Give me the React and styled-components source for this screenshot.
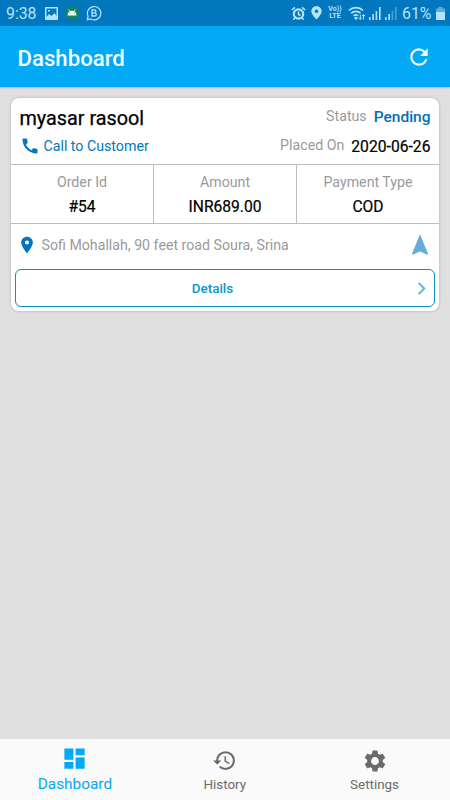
import React from 'react'
import styled, { createGlobalStyle } from 'styled-components'
import {
  MdCall,
  MdChevronRight,
  MdDashboard,
  MdHistory,
  MdNavigation,
  MdPlace,
  MdRefresh,
  MdSettings,
} from 'react-icons/md'

const order = {
  customer: 'myasar rasool',
  status: 'Pending',
  placedOn: '2020-06-26',
  address: 'Sofi Mohallah, 90 feet road Soura, Srina',
}

const stats = [
  { label: 'Order Id', value: '#54' },
  { label: 'Amount', value: 'INR689.00' },
  { label: 'Payment Type', value: 'COD' },
]

const PictureIcon = () => (
  <svg width="13" height="13" viewBox="0 0 13 13">
    <path
      fill="currentColor"
      fillRule="evenodd"
      d="M1 0h11a1 1 0 0 1 1 1v11a1 1 0 0 1-1 1H1a1 1 0 0 1-1-1V1a1 1 0 0 1 1-1zM1.500 1.500v8.500L4 7l2.500 2L9.500 6l2 3V1.500zM3 3h2v1.600H3z"
    />
  </svg>
)

const AndroidIcon = () => (
  <svg width="16" height="16" viewBox="0 0 16 16">
    <circle cx="8" cy="8" r="7.300" fill="#0c7c68" />
    <path d="M4 2v12M8 1v14M12 2v12M1 8h14M2 4h12M2 12h12" stroke="#2a927c" strokeWidth=".5" />
    <path d="M3.500 10.500a4.500 4.800 0 0 1 9 0z" fill="#f2fffb" />
    <path d="M4.800 4.500l1.500 2.500M11.200 4.500L9.700 7" stroke="#f2fffb" strokeWidth=".8" />
    <circle cx="6" cy="8.500" r=".5" fill="#0c7c68" />
    <circle cx="10" cy="8.500" r=".5" fill="#0c7c68" />
  </svg>
)

const BusinessIcon = () => (
  <svg width="16" height="16" viewBox="0 0 16 16" fill="none" stroke="currentColor">
    <path d="M1.300 14.700l.8-3.500A6.700 6.700 0 1 1 4.700 14z" strokeWidth="1.200" />
    <path d="M6 4.800h2.400a1.500 1.500 0 0 1 0 3H6zM6 7.800h2.700a1.600 1.600 0 0 1 0 3.200H6z" strokeWidth="1.300" />
  </svg>
)

const AlarmIcon = () => (
  <svg width="15" height="15" viewBox="0 0 15 15">
    <circle cx="7.500" cy="8" r="4.700" fill="none" stroke="currentColor" strokeWidth="2.200" />
    <path
      d="M.8 4L4 1.300M14.200 4L11 1.300M3.800 12L2.400 13.600M11.200 12l1.400 1.600M7.500 5.500v3l2 1"
      fill="none"
      stroke="currentColor"
      strokeWidth="1.600"
    />
  </svg>
)

const PinIcon = () => (
  <svg width="11" height="14" viewBox="0 0 11 14">
    <path
      fill="currentColor"
      fillRule="evenodd"
      d="M5.500 0A5.200 5.200 0 0 0 .3 5.200C.3 8.600 5.500 13.500 5.500 13.500s5.200-4.900 5.200-8.300A5.200 5.200 0 0 0 5.500 0zm0 3.500a1.800 1.800 0 1 1 0 3.600 1.800 1.800 0 0 1 0-3.600z"
    />
  </svg>
)

const WifiIcon = () => (
  <svg width="18" height="15" viewBox="0 0 18 15" fill="none" stroke="currentColor">
    <path d="M.8 4.500a10.500 10.500 0 0 1 14.400 0M3.200 7.300a7 7 0 0 1 9.400-.2M5.500 10a3.800 3.800 0 0 1 4.600-.4" strokeWidth="1.600" />
    <path d="M8 10.600l2 1.400-2 2-2-2z" fill="currentColor" stroke="none" />
    <path d="M12.300 8.500v4.800M10.800 11.800l1.500 1.700 1.500-1.700M15.500 13.500V8.700M14 10.200l1.500-1.700 1.500 1.700" strokeWidth="1" />
  </svg>
)

const SignalIcon = ({ weak }) => (
  <svg width="12" height="13" viewBox="0 0 12 13" fill="currentColor">
    <path d="M0 10h1.500v3H0zM3.300 7h1.600v6H3.300z" />
    <path d="M6.600 4h1.600v9H6.600z" opacity={weak ? 0.4 : 1} />
    <path d="M10 0h1.600v13H10z" opacity={weak ? 0.4 : 1} />
  </svg>
)

const BatteryIcon = () => (
  <svg width="9" height="13" viewBox="0 0 9 13" fill="currentColor">
    <path d="M2.500 0h4v1.500H9V5H0V1.500h2.500z" opacity=".5" />
    <path d="M0 5h9v7.500a.5.5 0 0 1-.5.5h-8a.5.5 0 0 1-.5-.5z" />
  </svg>
)

const App = () => {
  return (
    <>
      <GlobalStyle />
      <Screen>
        <StatusBar>
          <Clock>9:38</Clock>
          <Notifications>
            <PictureIcon />
            <AndroidIcon />
            <BusinessIcon />
          </Notifications>
          <SystemIcons>
            <AlarmIcon />
            <PinIcon />
            <Volte>
              <span>Vo))</span>
              <span>LTE</span>
            </Volte>
            <WifiIcon />
            <SignalIcon />
            <SignalIcon weak />
          </SystemIcons>
          <BatteryLevel>61%</BatteryLevel>
          <BatteryIcon />
        </StatusBar>

        <AppBar>
          <h1>Dashboard</h1>
          <MdRefresh size={26} />
        </AppBar>

        <Content>
          <OrderCard>
            <CardHeader>
              <div>
                <Customer>{order.customer}</Customer>
                <CallLink>
                  <MdCall size={20} />
                  <span>Call to Customer</span>
                </CallLink>
              </div>
              <Meta>
                <MetaRow>
                  <MetaLabel>Status</MetaLabel>
                  <Status>{order.status}</Status>
                </MetaRow>
                <MetaRow>
                  <MetaLabel>Placed On</MetaLabel>
                  <PlacedOn>{order.placedOn}</PlacedOn>
                </MetaRow>
              </Meta>
            </CardHeader>

            <Stats>
              {stats.map((stat) => (
                <Stat key={stat.label}>
                  <StatLabel>{stat.label}</StatLabel>
                  <StatValue>{stat.value}</StatValue>
                </Stat>
              ))}
            </Stats>

            <Address>
              <MdPlace size={20} color="#0277bd" />
              <span>{order.address}</span>
              <MdNavigation size={26} color="#67acd7" />
            </Address>

            <DetailsButton type="button">
              <span>Details</span>
              <MdChevronRight size={25} />
            </DetailsButton>
          </OrderCard>
        </Content>

        <BottomNav>
          <NavItem $active>
            <MdDashboard size={27} />
            <span>Dashboard</span>
          </NavItem>
          <NavItem>
            <MdHistory size={25} />
            <span>History</span>
          </NavItem>
          <NavItem>
            <MdSettings size={26} />
            <span>Settings</span>
          </NavItem>
        </BottomNav>
      </Screen>
    </>
  )
}

export default App

const GlobalStyle = createGlobalStyle`
  * {
    box-sizing: border-box;
  }

  body {
    margin: 0;
    font-family: Roboto, sans-serif;
  }

  svg {
    display: block;
    flex-shrink: 0;
  }
`

const Screen = styled.div`
  display: flex;
  flex-direction: column;
  width: 450px;
  height: 800px;
  overflow: hidden;
  background: #e0e0e0;
`

const StatusBar = styled.div`
  display: flex;
  align-items: center;
  height: 26px;
  padding: 0 5px 0 6px;
  background: #0277bd;
  color: #b5e3f7;
`

const Clock = styled.span`
  width: 39px;
  font-size: 15.8px;
  line-height: 26px;
  padding-top: 1px;
`

const Notifications = styled.div`
  display: flex;
  align-items: center;
  gap: 6px;
`

const SystemIcons = styled.div`
  display: flex;
  align-items: center;
  gap: 6px;
  margin-left: auto;

  svg:first-child {
    margin-right: -1px;
  }

  svg:nth-last-child(2) {
    margin-left: -3px;
  }

  svg:last-child {
    margin-left: -2px;
  }
`

const Volte = styled.span`
  display: flex;
  flex-direction: column;
  align-items: center;
  width: 14px;
  font-size: 7px;
  font-weight: 700;
  line-height: 7px;
`

const BatteryLevel = styled.span`
  width: 34px;
  margin-left: 5px;
  font-size: 15.8px;
  line-height: 26px;
  padding-top: 1px;
`

const AppBar = styled.header`
  display: flex;
  align-items: center;
  justify-content: space-between;
  height: 61px;
  padding: 1px 18px 0 17.5px;
  background: #03a9f4;
  color: #f0fcff;
  box-shadow: 0 1px 2px rgba(0, 0, 0, 0.2);

  h1 {
    margin: 0;
    padding-top: 1px;
    font-size: 22.2px;
    font-weight: 500;
    line-height: 28px;
  }
`

const Content = styled.main`
  flex: 1;
  padding: 11px 11px 0;
`

const OrderCard = styled.section`
  height: 213px;
  border-radius: 8px;
  background: #fff;
  box-shadow: 0 0 3px rgba(0, 0, 0, 0.25);
`

const CardHeader = styled.div`
  display: flex;
  justify-content: space-between;
  height: 67px;
  padding: 8px 8.5px 0;
  border-bottom: 1px solid #bdbdbd;
`

const Customer = styled.h2`
  margin: 0;
  font-size: 19.8px;
  font-weight: 400;
  line-height: 26px;
  color: #000;
  -webkit-text-stroke: 0.25px;
`

const CallLink = styled.a`
  display: flex;
  align-items: center;
  gap: 4px;
  margin-top: 4px;
  font-size: 14.2px;
  line-height: 20px;
  color: #0277bd;
`

const Meta = styled.div`
  display: flex;
  flex-direction: column;
  align-items: flex-end;
`

const MetaRow = styled.div`
  display: flex;
  gap: 7px;
  height: 30px;
`

const MetaLabel = styled.span`
  font-size: 14.2px;
  line-height: 20px;
  color: #9a9a9a;
`

const Status = styled.span`
  font-size: 15.5px;
  font-weight: 500;
  line-height: 22px;
  color: #0270b5;
`

const PlacedOn = styled.span`
  font-size: 15.7px;
  font-weight: 400;
  line-height: 23px;
  color: #000;
  -webkit-text-stroke: 0.2px;
`

const Stats = styled.div`
  display: grid;
  grid-template-columns: 142px 143px 143px;
  height: 59px;
  border-bottom: 1px solid #bdbdbd;
`

const Stat = styled.div`
  padding-top: 7px;
  text-align: center;

  & + & {
    border-left: 1px solid #bdbdbd;
  }
`

const StatLabel = styled.div`
  font-size: 14.2px;
  line-height: 20px;
  color: #9a9a9a;
`

const StatValue = styled.div`
  margin-top: 4px;
  font-size: 15.6px;
  font-weight: 400;
  line-height: 22px;
  color: #000;
  -webkit-text-stroke: 0.2px;
`

const Address = styled.div`
  display: flex;
  align-items: center;
  height: 41px;
  padding: 0 6.5px 0 6px;
  font-size: 14.2px;
  color: #9a9a9a;

  span {
    flex: 1;
    margin-left: 4.5px;
  }
`

const DetailsButton = styled.button`
  display: flex;
  align-items: center;
  width: 420px;
  height: 38px;
  margin: 4px auto 0;
  padding: 0;
  border: 1.5px solid #0b90c4;
  border-radius: 6px;
  background: #fff;
  font-family: inherit;
  font-size: 13.4px;
  font-weight: 500;
  color: #0997cf;

  span {
    flex: 1;
  }

  svg {
    color: #67b9e3;
  }
`

const BottomNav = styled.nav`
  display: grid;
  grid-template-columns: repeat(3, 1fr);
  height: 61px;
  padding-right: 0.5px;
  background: #fafafa;
`

const NavItem = styled.a`
  display: flex;
  flex-direction: column;
  align-items: center;
  padding-top: ${(props) => (props.$active ? '6px' : '9px')};
  color: ${(props) => (props.$active ? '#03a9f4' : '#6b6b6b')};

  span {
    margin-top: auto;
    margin-bottom: ${(props) => (props.$active ? '7px' : '6px')};
    font-size: ${(props) => (props.$active ? '15.4px' : '13.4px')};
    line-height: 18px;
  }
`
